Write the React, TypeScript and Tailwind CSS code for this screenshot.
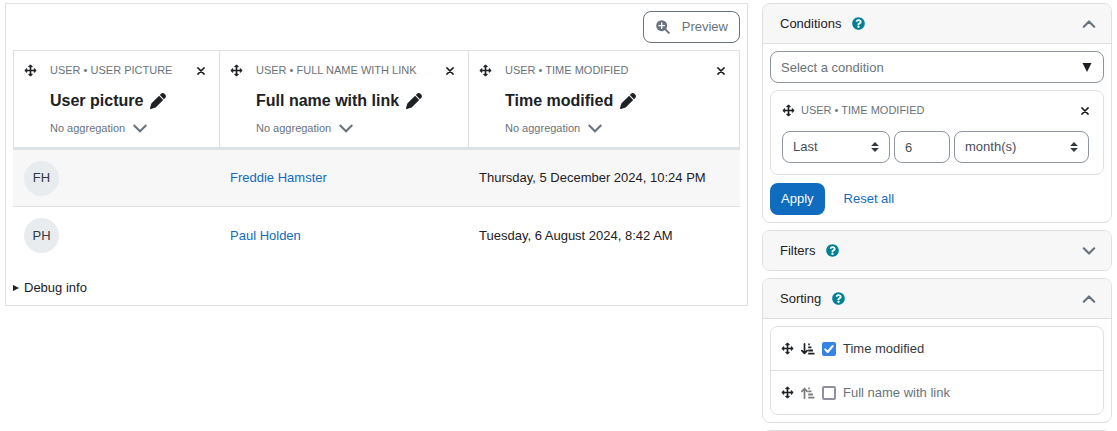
import React, { useState } from 'react';
import { FaQuestionCircle } from 'react-icons/fa';
import { FaPen } from 'react-icons/fa6';

interface Column {
  id: string;
  entity: string;
  title: string;
  width: string;
}

interface Row {
  initials: string;
  name: string;
  modified: string;
}

interface SortItem {
  id: string;
  label: string;
  enabled: boolean;
}

const columns: Column[] = [
  { id: 'picture', entity: 'User • User picture', title: 'User picture', width: 'w-[206px]' },
  { id: 'fullname', entity: 'User • Full name with link', title: 'Full name with link', width: 'w-[249px]' },
  { id: 'modified', entity: 'User • Time modified', title: 'Time modified', width: '' },
];

const rows: Row[] = [
  { initials: 'FH', name: 'Freddie Hamster', modified: 'Thursday, 5 December 2024, 10:24 PM' },
  { initials: 'PH', name: 'Paul Holden', modified: 'Tuesday, 6 August 2024, 8:42 AM' },
];

// Icons
const ChevronIcon = ({ up = false }: { up?: boolean }) => (
  <svg viewBox="0 0 14 8" className={up ? 'w-[14px] h-2 rotate-180' : 'w-[14px] h-2'} fill="none" stroke="#6a737b" strokeWidth="2.2" strokeLinecap="round" strokeLinejoin="round">
    <path d="M1.8 1.3 7 6.5l5.2-5.2" />
  </svg>
);

const WideChevronIcon = () => (
  <svg viewBox="0 0 14 9" className="w-[14px] h-[9px]" fill="none" stroke="#6a737b" strokeWidth="2">
    <path d="M.7 1 7 7.3 13.3 1" />
  </svg>
);

const CloseIcon = () => (
  <svg viewBox="0 0 8 8" className="w-2 h-2" fill="none" stroke="#1d2125" strokeWidth="1.5" strokeLinecap="round">
    <path d="M.9.9l6.2 6.2M7.1.9.9 7.1" />
  </svg>
);

const ZoomIcon = () => (
  <svg viewBox="0 0 14 14" className="w-[14px] h-[14px]" fill="none">
    <path d="M8.5 8.5 12.9 12.9" stroke="#6a737b" strokeWidth="1.9" strokeLinecap="round" />
    <circle cx="5.7" cy="5.7" r="5.5" fill="#6a737b" />
    <path d="M5.7 3v5.4M3 5.7h5.4" stroke="#fff" strokeWidth="1.3" strokeLinecap="round" />
  </svg>
);

const MoveIcon = () => (
  <svg viewBox="0 0 13 13" className="w-[13px] h-[13px]" fill="currentColor" stroke="currentColor" strokeLinejoin="round">
    <path d="M6.5 2v9M2 6.5h9" strokeWidth="1.6" />
    <path d="M6.5.8 8.4 2.8H4.6zM6.5 12.2 4.6 10.2h3.8zM.8 6.5l2-1.9v3.8zM12.2 6.5l-2 1.9V4.6z" strokeWidth=".9" />
  </svg>
);

const SortIcon = ({ down = false }: { down?: boolean }) => (
  <svg viewBox="0 0 14 12" className="w-[14px] h-3" fill="none" stroke="currentColor">
    <path
      d={down ? 'M3.5.9v9.4M.9 7.7l2.6 2.7 2.6-2.7' : 'M3.5 11.1V1.7M.9 4.3l2.6-2.7 2.6 2.7'}
      strokeWidth="1.7"
      strokeLinecap="round"
      strokeLinejoin="round"
    />
    <path d="M7.2 1.3h1.6M7.2 4.4h3.2M7.2 7.5h4.7M7.2 10.6h6.3" strokeWidth="1.8" />
  </svg>
);

const SortArrows = () => (
  <svg viewBox="0 0 8 10" className="absolute right-[11px] top-[11px] w-2 h-[10px] pointer-events-none" fill="#343a40">
    <path d="M4 0 7.9 4.1H.1zM4 10 .1 5.9h7.8z" />
  </svg>
);

const MoveButton = ({ label }: { label: string }) => (
  <button type="button" aria-label={label} className="shrink-0 text-[#1d2125]">
    <MoveIcon />
  </button>
);

const FormSelect = ({ label, value, className }: { label: string; value: string; className: string }) => (
  <div className={`relative ${className}`}>
    <select aria-label={label} className="appearance-none w-full h-8 rounded-lg border border-[#8f959e] bg-white px-[10px] text-[#495057]">
      <option>{value}</option>
    </select>
    <SortArrows />
  </div>
);

interface PanelProps {
  title: string;
  open?: boolean;
  children?: React.ReactNode;
}

const Panel = ({ title, open = false, children }: PanelProps) => (
  <section className="rounded-lg border border-[#dfdfdf] overflow-hidden shrink-0">
    <header className={`flex items-center h-[39px] box-content bg-[#f7f7f7] pl-[17px] pr-[15px] ${open ? 'border-b border-[#dfdfdf]' : ''}`}>
      <h2>{title}</h2>
      <button type="button" aria-label={`Help with ${title}`} className="ml-[11px] text-[#008196]">
        <FaQuestionCircle size={13} />
      </button>
      <button type="button" aria-label={`Toggle ${title}`} aria-expanded={open} className="ml-auto">
        <ChevronIcon up={open} />
      </button>
    </header>
    {open && <div className="p-[7px]">{children}</div>}
  </section>
);

const ReportTable = () => (
  <table className="w-full table-fixed border-separate border-spacing-0 text-left">
    <thead>
      <tr>
        {columns.map(col => (
          <th key={col.id} className={`${col.width} border-l border-t border-b-3 last:border-r border-[#dee2e6] px-[10px] py-[9px] font-normal align-top`}>
            <div className="flex items-center h-5">
              <MoveButton label={`Move column ${col.title}`} />
              <span className="ml-[13px] text-[11px] uppercase whitespace-nowrap text-[#6a737b]">{col.entity}</span>
              <button type="button" aria-label={`Delete column ${col.title}`} className="ml-auto mr-1 pt-[2px]">
                <CloseIcon />
              </button>
            </div>
            <div className="flex items-center gap-[7px] h-5 mt-[11px] pl-[26px]">
              <span className="text-[16px] font-bold whitespace-nowrap">{col.title}</span>
              <button type="button" aria-label={`Rename ${col.title}`}>
                <FaPen size={16} />
              </button>
            </div>
            <div className="flex items-center h-5 mt-[7px] pl-[26px]">
              <div className="relative flex items-center">
                <select aria-label={`Aggregation for ${col.title}`} className="appearance-none pr-[21px] text-[11px] leading-5 text-[#6a737b]">
                  <option>No aggregation</option>
                </select>
                <span className="absolute right-0 pointer-events-none">
                  <WideChevronIcon />
                </span>
              </div>
            </div>
          </th>
        ))}
      </tr>
    </thead>
    <tbody>
      {rows.map(row => (
        <tr key={row.initials} className="group h-[57px] odd:bg-[#f7f7f7]">
          <td className="px-[11px] group-odd:border-b border-[#dee2e6]">
            <span className="flex items-center justify-center w-[35px] h-[35px] rounded-full bg-[#e9ecef] text-[#343a40]">
              {row.initials}
            </span>
          </td>
          <td className="px-[11px] group-odd:border-b border-[#dee2e6]">
            <a href="#" className="text-[#0f6cbf]">{row.name}</a>
          </td>
          <td className="px-[11px] group-odd:border-b border-[#dee2e6]">{row.modified}</td>
        </tr>
      ))}
    </tbody>
  </table>
);

const App: React.FC = () => {
  const [sorting, setSorting] = useState<SortItem[]>([
    { id: 'sort-modified', label: 'Time modified', enabled: true },
    { id: 'sort-fullname', label: 'Full name with link', enabled: false },
  ]);

  const toggleSort = (id: string) => {
    setSorting(prev => prev.map(item => (item.id === id ? { ...item, enabled: !item.enabled } : item)));
  };

  return (
    <div className="flex items-start gap-[14px] h-screen overflow-hidden bg-white px-[5px] pt-[3px] font-['Liberation_Sans',Arial,sans-serif] text-[13px] leading-5 text-[#1d2125]">
      {/* Report */}
      <main className="flex-1 min-w-0 border border-[#dee2e6] p-[7px]">
        <div className="flex justify-end mb-[7px]">
          <button type="button" className="flex items-center gap-3 h-8 rounded-lg border border-[#6a737b] pl-3 pr-[11px] text-[#6a737b]">
            <ZoomIcon />
            Preview
          </button>
        </div>
        <ReportTable />
        <details className="group mt-[14px]">
          <summary className="flex items-center gap-[5px]">
            <svg viewBox="0 0 6 6" className="w-[6px] h-[6px] group-open:rotate-90" fill="#1d2125">
              <path d="M0 0l6 3-6 3z" />
            </svg>
            Debug info
          </summary>
        </details>
      </main>

      {/* Settings sidebar */}
      <aside className="flex flex-col gap-[7px] w-[350px] shrink-0">
        <Panel title="Conditions" open>
          <div className="relative">
            <input
              type="text"
              aria-label="Select a condition"
              placeholder="Select a condition"
              className="w-full h-8 rounded-lg border border-[#8f959e] px-[10px] placeholder:text-[#6a737b]"
            />
            <svg viewBox="0 0 10 9" className="absolute right-3 top-[12px] w-[10px] h-[9px] pointer-events-none" fill="#1d2125">
              <path d="M.5 0h9L5 9z" />
            </svg>
          </div>
          <div className="mt-[7px] rounded-lg border border-[#dfdfdf] pl-[11px] pr-[14px] pt-[9px] pb-[11px]">
            <div className="flex items-center h-5 mb-[11px]">
              <MoveButton label="Move condition Time modified" />
              <span className="ml-[6px] text-[11px] uppercase text-[#6a737b]">User • Time modified</span>
              <button type="button" aria-label="Delete condition Time modified" className="ml-auto pt-[2px]">
                <CloseIcon />
              </button>
            </div>
            <div className="flex gap-1">
              <FormSelect label="Operator" value="Last" className="w-[108px]" />
              <input
                type="text"
                aria-label="Duration"
                defaultValue="6"
                className="w-14 h-8 rounded-lg border border-[#8f959e] px-[10px] text-[#495057]"
              />
              <FormSelect label="Unit" value="month(s)" className="flex-1" />
            </div>
          </div>
          <div className="flex items-center mt-2">
            <button type="button" className="h-8 rounded-lg bg-[#0f6cbf] px-[11px] text-white">Apply</button>
            <button type="button" className="h-8 px-[19px] text-[#0f6cbf]">Reset all</button>
          </div>
        </Panel>

        <Panel title="Filters" />

        <Panel title="Sorting" open>
          <ul className="rounded-lg border border-[#dfdfdf] divide-y divide-[#dfdfdf]">
            {sorting.map(item => (
              <li key={item.id} className="flex items-center gap-[7px] h-11 last:h-[43px] px-[10px]">
                <MoveButton label={`Move sorting ${item.label}`} />
                <button type="button" aria-label={`Sort direction for ${item.label}`} className={item.enabled ? '' : 'text-[#7d7d7d]'}>
                  <SortIcon down={item.enabled} />
                </button>
                <span className="relative flex">
                  <input
                    id={item.id}
                    type="checkbox"
                    checked={item.enabled}
                    onChange={() => toggleSort(item.id)}
                    className="appearance-none w-[14px] h-[14px] rounded-xs border-2 border-[#8f8f9d] checked:border-[#3584e4] checked:bg-[#3584e4]"
                  />
                  {item.enabled && (
                    <svg viewBox="0 0 14 14" className="absolute inset-0 w-[14px] h-[14px] pointer-events-none" fill="none" stroke="#fff" strokeWidth="2" strokeLinecap="round" strokeLinejoin="round">
                      <path d="M3.2 7.4 5.7 10l5-6" />
                    </svg>
                  )}
                </span>
                <label htmlFor={item.id} className={item.enabled ? 'text-[#343a40]' : 'text-[#6a737b]'}>{item.label}</label>
              </li>
            ))}
          </ul>
        </Panel>

        <div className="h-10 shrink-0 rounded-t-lg border border-[#dfdfdf] bg-[#f7f7f7]" />
      </aside>
    </div>
  );
};

export default App;
